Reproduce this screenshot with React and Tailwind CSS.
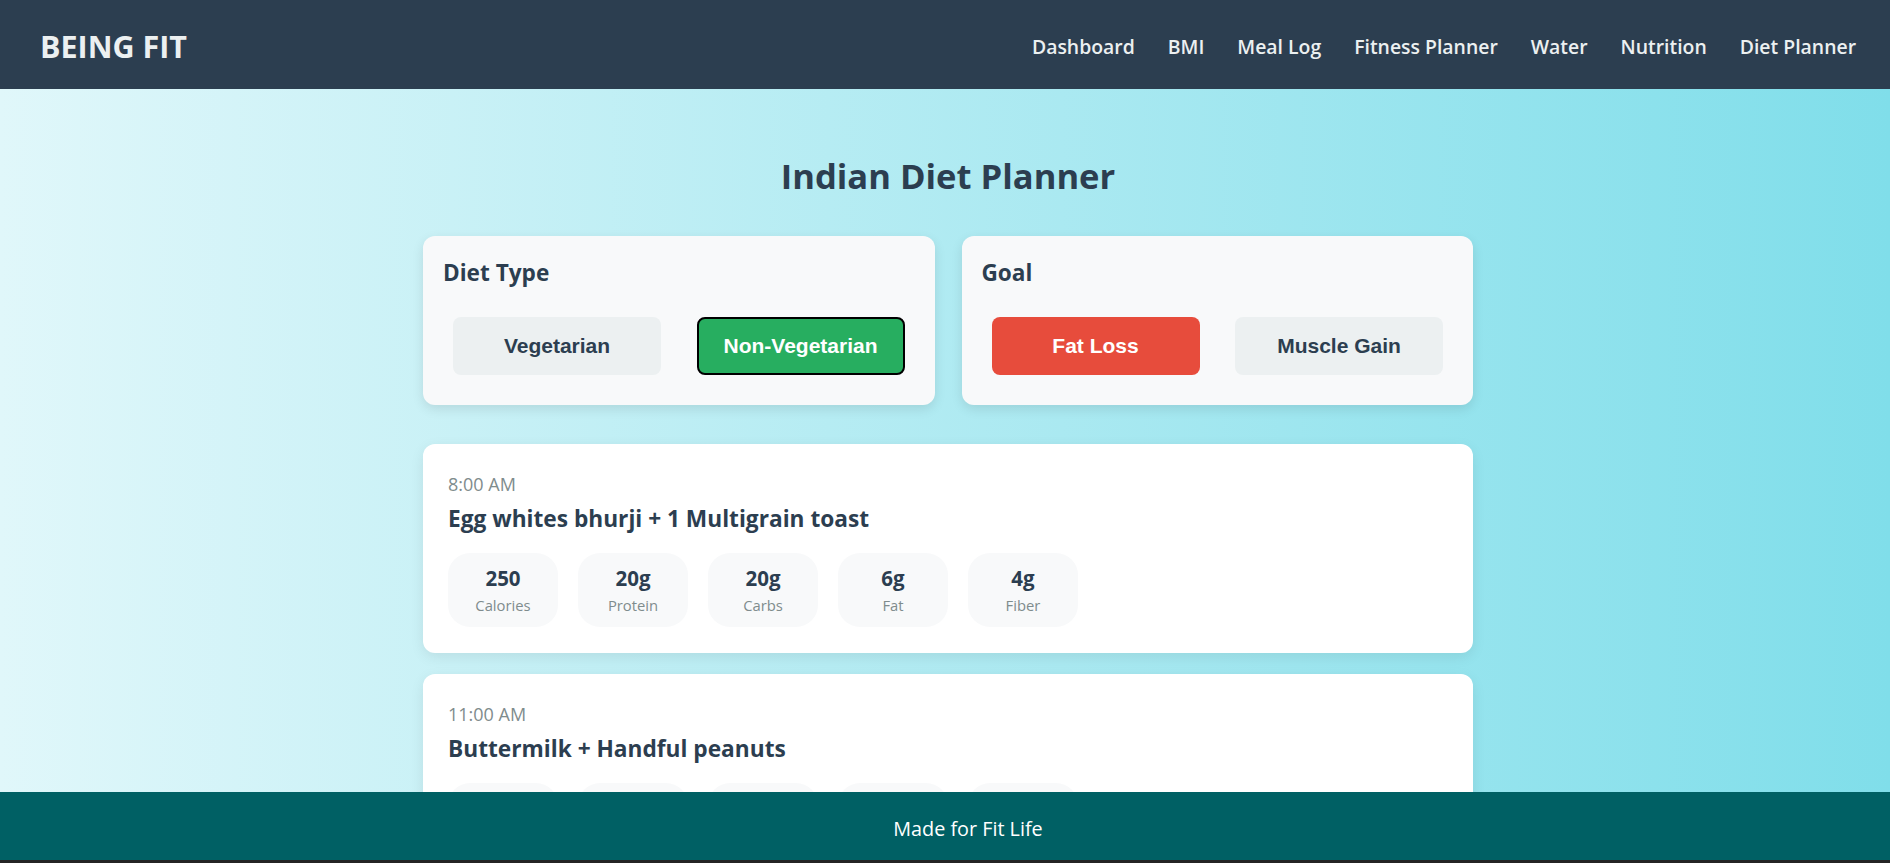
import React from 'react';

const navLinks = ["Dashboard", "BMI", "Meal Log", "Fitness Planner", "Water", "Nutrition", "Diet Planner"];

const meals = [
    {
        time: "8:00 AM",
        name: "Egg whites bhurji + 1 Multigrain toast",
        macros: [["250", "Calories"], ["20g", "Protein"], ["20g", "Carbs"], ["6g", "Fat"], ["4g", "Fiber"]]
    },
    {
        time: "11:00 AM",
        name: "Buttermilk + Handful peanuts",
        macros: [["180", "Calories"], ["8g", "Protein"], ["10g", "Carbs"], ["12g", "Fat"], ["3g", "Fiber"]]
    }
];

function ChoiceCard({ title, options }) {
    return (
        <div className="bg-[#f8f9fa] rounded-[12px] p-5 shadow-[0_4px_12px_rgba(0,0,0,0.1)]">
            <h3 className="text-[#2c3e50] text-[22.6px] font-bold leading-[34px] mb-[17px]">{title}</h3>
            <div className="flex justify-between p-[10px]">
                {options.map((opt) => (
                    <button
                        key={opt.label}
                        className={`w-[208px] h-[58px] rounded-[8px] font-['Liberation_Sans',Arial,sans-serif] font-bold text-[21px] ${opt.cls}`}
                    >
                        {opt.label}
                    </button>
                ))}
            </div>
        </div>
    );
}

function MealCard({ meal }) {
    return (
        <div className="bg-white rounded-[12px] px-[25px] pt-[26px] pb-[26px] mb-[21px] shadow-[0_4px_14px_rgba(0,0,0,0.08)]">
            <div className="text-[#7f8c8d] text-[18px] leading-[28px]">{meal.time}</div>
            <h4 className="text-[#2c3e50] text-[22.7px] font-bold leading-[32px] mt-[5px] mb-[18px]">{meal.name}</h4>
            <div className="flex gap-5">
                {meal.macros.map(([value, label]) => (
                    <div key={label} className="w-[110px] h-[74px] bg-[#f8f9fa] rounded-[22px] flex flex-col items-center justify-center gap-[2px]">
                        <span className="text-[#2c3e50] text-[20.5px] font-bold leading-[28px]">{value}</span>
                        <span className="text-[#7f8c8d] text-[14.8px] leading-[22px]">{label}</span>
                    </div>
                ))}
            </div>
        </div>
    );
}

export default function App() {
    return (
        <div className="h-screen overflow-hidden bg-[linear-gradient(to_right,#e0f7fa,#80deea)] font-['Open_Sans','Noto_Sans',sans-serif]">
            <nav className="h-[89px] bg-[#2c3e50] flex items-center justify-between pl-10 pr-[34px] pt-1">
                <div className="text-[#ecf0f1] text-[30.5px] font-bold">BEING FIT</div>
                <div className="flex gap-[33px]">
                    {navLinks.map((link) => (
                        <a key={link} className="text-[#ecf0f1] text-[19.4px] font-semibold">{link}</a>
                    ))}
                </div>
            </nav>

            <main className="w-[1050px] ml-[calc(50%-522px)] pt-[65px]">
                <h1 className="text-center text-[#2c3e50] text-[34.6px] font-bold leading-[44px] mb-[38px]">Indian Diet Planner</h1>

                <div className="grid grid-cols-2 gap-[27px] mb-[39px]">
                    <ChoiceCard
                        title="Diet Type"
                        options={[
                            { label: "Vegetarian", cls: "bg-[#ecf0f1] text-[#2c3e50]" },
                            { label: "Non-Vegetarian", cls: "bg-[#27ae60] text-white border-2 border-black" }
                        ]}
                    />
                    <ChoiceCard
                        title="Goal"
                        options={[
                            { label: "Fat Loss", cls: "bg-[#e74c3c] text-white" },
                            { label: "Muscle Gain", cls: "bg-[#ecf0f1] text-[#2c3e50]" }
                        ]}
                    />
                </div>

                {meals.map((meal) => (
                    <MealCard key={meal.time} meal={meal} />
                ))}
            </main>

            <footer className="fixed bottom-0 left-0 right-0 h-[71px] bg-[#006064] border-b-[3px] border-[#242424] flex items-center justify-center pl-[46px] pt-[6px]">
                <p className="text-white text-[19.8px]">Made for Fit Life</p>
            </footer>
        </div>
    );
}
